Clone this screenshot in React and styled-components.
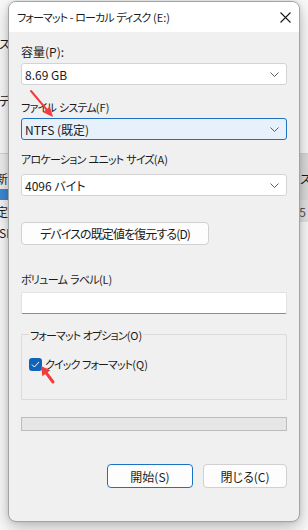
import React from "react";
import styled, { createGlobalStyle } from "styled-components";

const GlobalStyle = createGlobalStyle`
  html, body { margin: 0; padding: 0; }
  body {
    background: #fafafa;
    font-family: "Noto Sans CJK JP", "Noto Sans", sans-serif;
    font-feature-settings: "palt" 1;
    color: #1a1a1a;
  }
`;

const Screen = styled.div`
  position: relative;
  width: 308px;
  height: 530px;
  overflow: hidden;
  background: #fafafa;
`;

/* the explorer window behind the dialog */
const BackWindow = styled.div`
  display: flex;
  flex-direction: column;
  font-size: 12px;
`;

const BackRow = styled.div`
  display: flex;
  align-items: stretch;
  justify-content: space-between;
  height: ${(p) => p.$h}px;
  background: ${(p) => p.$bg || "transparent"};
  border-bottom: ${(p) => (p.$line ? "1px solid #d4d4d4" : "none")};
`;

const BackLeft = styled.span`
  display: flex;
  align-items: center;
  margin-left: ${(p) => p.$shift || 0}px;
  white-space: nowrap;
`;

const BackRight = styled.span`
  display: flex;
  align-items: center;
  width: 8px;
  overflow: hidden;
  white-space: nowrap;
  background: ${(p) => p.$bg || "transparent"};
`;

const BackRightText = styled.span`
  margin-left: ${(p) => p.$shift || 0}px;
  color: ${(p) => p.$color || "#1a1a1a"};
`;

const Dialog = styled.div`
  position: absolute;
  left: 8px;
  top: 1px;
  width: 292px;
  height: 521px;
  box-sizing: border-box;
  border: 1px solid #a3a3a3;
  border-radius: 8px;
  background: #f0f0f0;
  box-shadow: 0 6px 18px rgba(0, 0, 0, 0.25), 0 0 5px rgba(0, 0, 0, 0.12);
  overflow: hidden;
  display: flex;
  flex-direction: column;
`;

const TitleBar = styled.div`
  height: 30px;
  flex: none;
  background: #ffffff;
  display: flex;
  align-items: center;
  justify-content: space-between;
  padding-left: 8px;
`;

/* kana-heavy captions: the UI font is narrower than Noto, so tighten them */
const Caption = styled.span`
  font-size: 11px;
  line-height: 16px;
  letter-spacing: ${(p) => p.$ls ?? -0.85}px;
  word-spacing: 1px;
  white-space: nowrap;
`;

/* access key hint like (F), kept at normal spacing */
const Accel = styled.span`
  letter-spacing: 0;
`;

const Title = styled(Caption)`
  color: #1b1b1b;
`;

const CloseButton = styled.button`
  width: 28px;
  height: 30px;
  border: none;
  background: transparent;
  padding: 0;
  display: flex;
  align-items: center;
  justify-content: center;
`;

const Body = styled.div`
  flex: 1;
  display: flex;
  flex-direction: column;
  padding: 11px 12px 0;
`;

const Label = styled.div`
  display: flex;
  align-items: center;
  height: 16px;
  font-size: 12px;
  margin-top: ${(p) => p.$mt || 0}px;
  white-space: nowrap;
`;

const Combo = styled.div`
  height: 22px;
  box-sizing: border-box;
  margin-top: ${(p) => p.$mt || 0}px;
  display: flex;
  align-items: center;
  justify-content: space-between;
  padding: 0 7px 0 3px;
  font-size: 12px;
  border: 1px solid ${(p) => (p.$focused ? "#1f6fc4" : "#d3d3d3")};
  border-radius: 3px;
  background: ${(p) => (p.$focused ? "#e6f1fb" : "#ffffff")};
`;

const PushButton = styled.button`
  height: ${(p) => p.$h || 24}px;
  width: ${(p) => p.$w}px;
  margin-top: ${(p) => p.$mt || 0}px;
  padding: 0;
  font-family: inherit;
  font-feature-settings: "palt" 1;
  font-size: 12px;
  letter-spacing: ${(p) => p.$ls || 0}px;
  color: #1a1a1a;
  background: #fdfdfd;
  border: 1px solid ${(p) => (p.$primary ? "#1a72c7" : "#d0d0d0")};
  border-radius: 4px;
`;

const TextBox = styled.div`
  height: 22px;
  box-sizing: border-box;
  margin-top: ${(p) => p.$mt || 0}px;
  background: #ffffff;
  border: 1px solid #e2e2e2;
  border-bottom: 1px solid #8c8c8c;
  border-radius: 2px;
`;

const Group = styled.fieldset`
  margin: ${(p) => p.$mt || 0}px 0 0;
  padding: 0 7px;
  height: 75px;
  box-sizing: border-box;
  min-width: 0;
  border: 1px solid #dadada;
  border-radius: 1px;
`;

const Legend = styled.legend`
  padding: 0 1px;
  line-height: 16px;
`;

const CheckRow = styled.label`
  display: flex;
  align-items: center;
  gap: 3px;
  margin-top: 13px;
  height: 16px;
`;

const CheckBox = styled.span`
  width: 13px;
  height: 13px;
  flex: none;
  border-radius: 3px;
  background: #0f63bb;
  display: flex;
  align-items: center;
  justify-content: center;
`;

const Progress = styled.div`
  height: 14px;
  box-sizing: border-box;
  margin-top: ${(p) => p.$mt || 0}px;
  background: #e6e6e6;
  border: 1px solid #bcbcbc;
`;

const ButtonRow = styled.div`
  display: flex;
  justify-content: flex-end;
  gap: 10px;
  margin-top: ${(p) => p.$mt || 0}px;
`;

const Overlay = styled.svg`
  position: absolute;
  left: 0;
  top: 0;
  pointer-events: none;
`;

const Chevron = () => (
  <svg width="9" height="5" viewBox="0 0 9 5">
    <path d="M0.5 0.5 L4.5 4.5 L8.5 0.5" fill="none" stroke="#5f5f5f" strokeWidth="1" />
  </svg>
);

function Select({ value, focused, mt }) {
  return (
    <Combo $focused={focused} $mt={mt}>
      <span>{value}</span>
      <Chevron />
    </Combo>
  );
}

function Text({ text, accel, ls }) {
  return (
    <Caption $ls={ls}>
      {text}
      <Accel>{accel}</Accel>
    </Caption>
  );
}

export default function App() {
  return (
    <Screen>
      <GlobalStyle />
      <BackWindow>
        <BackRow $h={30} />
        <BackRow $h={26}>
          <BackLeft $shift={-1}>スク</BackLeft>
        </BackRow>
        <BackRow $h={32} />
        <BackRow $h={24}>
          <BackLeft $shift={-1}>デバイス</BackLeft>
        </BackRow>
        <BackRow $h={41} $line />
        <BackRow $h={14} $bg="#f0f0f0">
          <span />
          <BackRight $bg="#dcdcdc" />
        </BackRow>
        <BackRow $h={21} $bg="#f0f0f0">
          <BackLeft $shift={-4}>新カ</BackLeft>
          <BackRight $bg="#dcdcdc">スト</BackRight>
        </BackRow>
        <BackRow $h={11} $bg="#3d8ad6">
          <span />
          <BackRight $bg="#dcdcdc" />
        </BackRow>
        <BackRow $h={22} $bg="#f6f6f6">
          <BackLeft $shift={-4}>定き</BackLeft>
          <BackRight $bg="#e4e4e4">
            <BackRightText $shift={-4} $color="#555">.5</BackRightText>
          </BackRight>
        </BackRow>
        <BackRow $h={20}>
          <BackLeft $shift={-1}>SE</BackLeft>
        </BackRow>
      </BackWindow>

      <Dialog>
        <TitleBar>
          <Title $ls={-0.9}>
            フォーマット - ローカル ディスク <Accel>(E:)</Accel>
          </Title>
          <CloseButton>
            <svg width="11" height="11" viewBox="0 0 11 11">
              <path d="M0.5 0.5 L10.5 10.5 M10.5 0.5 L0.5 10.5" stroke="#1a1a1a" strokeWidth="1.1" />
            </svg>
          </CloseButton>
        </TitleBar>
        <Body>
          <Label>容量(P):</Label>
          <Select value="8.69 GB" mt={4} />
          <Label $mt={14}>
            <Text text="ファイル システム" accel="(F)" ls={-0.75} />
          </Label>
          <Select value="NTFS (既定)" focused mt={3} />
          <Label $mt={11}>
            <Text text="アロケーション ユニット サイズ" accel="(A)" ls={-0.75} />
          </Label>
          <Select value="4096 バイト" mt={7} />
          <PushButton $w={188} $h={23} $mt={26} $ls={-0.9}>
            デバイスの既定値を復元する(D)
          </PushButton>
          <Label $mt={26}>
            <Text text="ボリューム ラベル" accel="(L)" ls={-0.7} />
          </Label>
          <TextBox $mt={5} />
          <Group $mt={11}>
            <Legend>
              <Text text="フォーマット オプション" accel="(O)" ls={-0.9} />
            </Legend>
            <CheckRow>
              <CheckBox>
                <svg width="9" height="7" viewBox="0 0 9 7">
                  <path d="M1 3.6 L3.4 6 L8 1" fill="none" stroke="#ffffff" strokeWidth="1" />
                </svg>
              </CheckBox>
              <Text text="クイック フォーマット" accel="(Q)" ls={-0.9} />
            </CheckRow>
          </Group>
          <Progress $mt={17} />
          <ButtonRow $mt={33}>
            <PushButton $w={86} $primary>
              開始(S)
            </PushButton>
            <PushButton $w={84}>閉じる(C)</PushButton>
          </ButtonRow>
        </Body>
      </Dialog>

      <Overlay width="308" height="530" viewBox="0 0 308 530">
        <path d="M31 91 L46.5 109.4" stroke="#f23b3b" strokeWidth="2" strokeLinecap="round" />
        <polygon points="53,117 43.1,112.3 49.9,106.5" fill="#f23b3b" />
        <path d="M46.4 373.2 L53 382" stroke="#f23b3b" strokeWidth="3" strokeLinecap="round" />
        <polygon points="41,366 50.4,370.2 42.4,376.2" fill="#f23b3b" />
      </Overlay>
    </Screen>
  );
}
